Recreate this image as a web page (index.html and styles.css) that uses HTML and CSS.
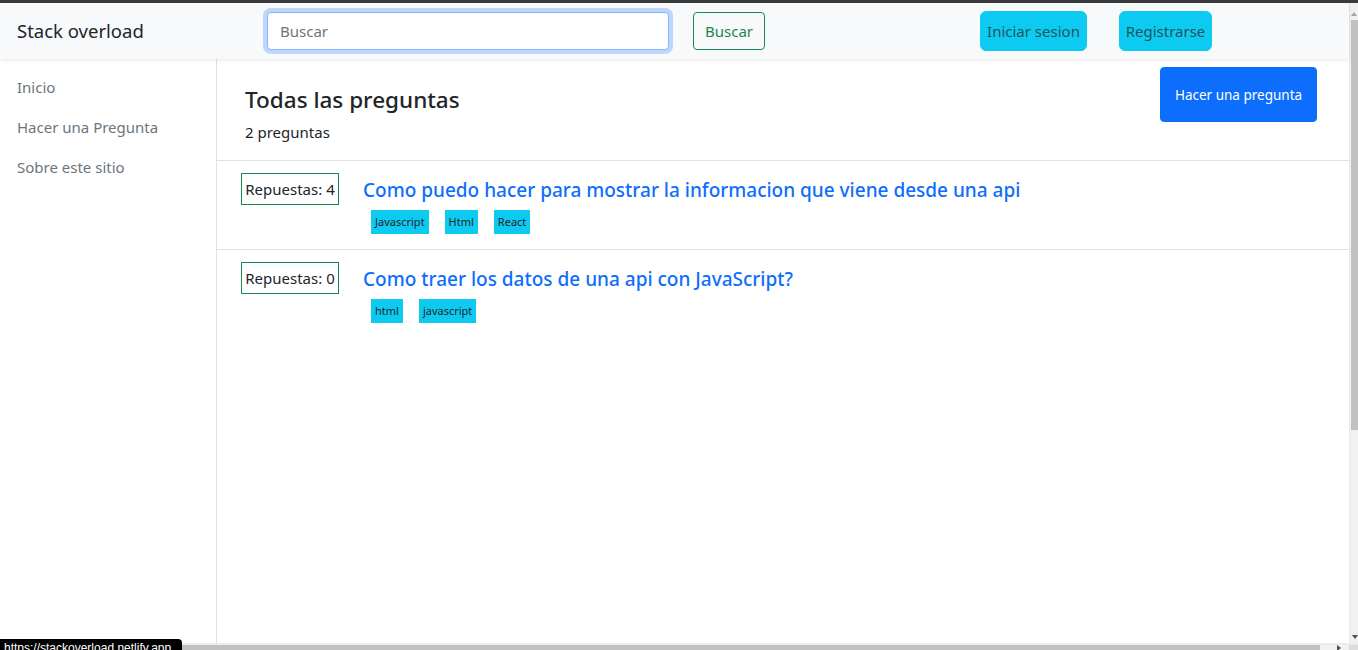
FILE: index.html
```html
<!DOCTYPE html>
<html lang="es">
<head>
<meta charset="utf-8">
<title>Stack overload</title>
<link rel="stylesheet" href="styles.css">
</head>
<body>
<div class="frame">
  <div class="chrome-top"></div>
  <div class="viewport">
    <div class="page">
      <nav class="navbar">
        <a class="brand" href="#">Stack overload</a>
        <input class="search" type="text" placeholder="Buscar">
        <button class="btn btn-outline-success">Buscar</button>
        <button class="btn btn-info btn-login">Iniciar sesion</button>
        <button class="btn btn-info btn-register">Registrarse</button>
      </nav>
      <div class="content">
        <aside class="sidebar">
          <a class="side-link" href="#">Inicio</a>
          <a class="side-link" href="#">Hacer una Pregunta</a>
          <a class="side-link" href="#">Sobre este sitio</a>
        </aside>
        <main class="main">
          <header class="main-header">
            <div class="heading">
              <h1 class="title">Todas las preguntas</h1>
              <p class="count">2 preguntas</p>
            </div>
            <button class="btn btn-primary btn-ask">Hacer una pregunta</button>
          </header>
          <div class="question">
            <div class="answers">Repuestas: 4</div>
            <div class="q-body">
              <a class="q-title" href="#">Como puedo hacer para mostrar la informacion que viene desde una api</a>
              <div class="tags">
                <span class="tag">Javascript</span>
                <span class="tag">Html</span>
                <span class="tag">React</span>
              </div>
            </div>
          </div>
          <div class="question">
            <div class="answers">Repuestas: 0</div>
            <div class="q-body">
              <a class="q-title" href="#">Como traer los datos de una api con JavaScript?</a>
              <div class="tags">
                <span class="tag">html</span>
                <span class="tag">javascript</span>
              </div>
            </div>
          </div>
        </main>
      </div>
    </div>
    <div class="vscroll">
      <div class="arrow-up"></div>
      <div class="vthumb"></div>
      <div class="vspace"></div>
      <div class="arrow-down"></div>
    </div>
  </div>
  <div class="hscroll">
    <div class="hthumb"></div>
    <div class="hspace"><div class="arrow-right"></div></div>
    <div class="corner"></div>
  </div>
  <div class="status">https://stackoverload.netlify.app</div>
</div>
</body>
</html>
```
FILE: styles.css
```css
* { box-sizing: border-box; }
html, body { margin: 0; padding: 0; background: #fff; }
body {
  font-family: "Noto Sans", "Open Sans", sans-serif;
  color: #212529;
  font-size: 16px;
}
.frame {
  width: 1358px;
  height: 650px;
  overflow: hidden;
  position: relative;
  display: flex;
  flex-direction: column;
}
.chrome-top { height: 3px; background: #3a3a3a; flex: none; }
.viewport { flex: 1; display: flex; min-height: 0; }
.page { flex: 1; display: flex; flex-direction: column; min-width: 0; }

.navbar {
  height: 56px;
  flex: none;
  background: #f8f9fa;
  box-shadow: 0 2px 4px rgba(0,0,0,.075);
  display: flex;
  align-items: center;
  padding-left: 17px;
  position: relative;
  z-index: 2;
}
.brand {
  width: 250px;
  flex: none;
  font-size: 18.5px;
  color: #212529;
  text-decoration: none;
  line-height: 30px;
}
.search {
  width: 402px;
  flex: none;
  height: 38px;
  border: 1px solid #86b7fe;
  border-radius: 4px;
  box-shadow: 0 0 0 4px rgba(13,110,253,.25);
  padding: 6px 12px;
  font-family: inherit;
  font-size: 15px;
  color: #212529;
  background: #fff;
  outline: none;
}
.search::placeholder { color: #6c757d; }
.btn {
  font-family: inherit;
  font-size: 15px;
  line-height: 24px;
  padding: 6px 12px;
  border-radius: 4px;
  border: 1px solid transparent;
  cursor: pointer;
  white-space: nowrap;
  flex: none;
}
.btn-outline-success {
  margin-left: 24px;
  height: 38px;
  width: 72px;
  padding: 6px 0;
  color: #198754;
  border-color: #198754;
  background: transparent;
}
.btn-info {
  height: 40px;
  background: #0dcaf0;
  border-color: #0dcaf0;
  color: #1b5563;
  border-radius: 6px;
  padding: 6px 0;
}
.btn-login { margin-left: 215px; width: 107px; }
.btn-register { margin-left: 32px; width: 93px; }

.content { flex: 1; display: flex; min-height: 0; }
.sidebar {
  width: 217px;
  flex: none;
  border-right: 1px solid #dee2e6;
  display: flex;
  flex-direction: column;
  padding-top: 16px;
  padding-left: 17px;
  gap: 16px;
}
.side-link {
  color: #6c757d;
  text-decoration: none;
  line-height: 24px;
  font-size: 15px;
}
.main { flex: 1; min-width: 0; }
.main-header {
  height: 102px;
  border-bottom: 1px solid #dee2e6;
  display: flex;
  justify-content: space-between;
  align-items: flex-start;
  padding: 8px 32px 0 28px;
}
.heading { padding-top: 18px; }
.title {
  margin: 0;
  font-size: 22.5px;
  font-weight: 500;
  line-height: 29px;
}
.count {
  margin: 6px 0 0;
  font-size: 15px;
  line-height: 24px;
}
.btn-primary {
  background: #0d6efd;
  border-color: #0d6efd;
  color: #fff;
  font-size: 13.5px;
  height: 55px;
  width: 157px;
  padding: 0;
  border-radius: 4px;
}

.question {
  display: flex;
  align-items: flex-start;
  padding: 12px 0 15px 24px;
  border-bottom: 1px solid #dee2e6;
}
.question:last-child { border-bottom: none; }
.answers {
  border: 1px solid #198754;
  padding: 3px 0;
  line-height: 24px;
  font-size: 15px;
  width: 98px;
  text-align: center;
  white-space: nowrap;
}
.q-body { margin-left: 24px; padding-top: 5px; }
.q-title {
  display: block;
  color: #0d6efd;
  text-decoration: none;
  font-size: 19px;
  font-weight: 500;
  line-height: 24px;
}
.tags { display: flex; gap: 16px; margin: 8px 0 0 8px; }
.tag {
  background: #0dcaf0;
  font-size: 11px;
  line-height: 16px;
  padding: 4px 4px;
  color: #212529;
}

.vscroll {
  width: 9px;
  flex: none;
  background: #f1f1f1;
  display: flex;
  flex-direction: column;
  align-items: flex-end;
  border-left: 1px solid #e8e8e8;
}
.arrow-up {
  margin: 9px 1px 0 0;
  width: 0; height: 0;
  border-left: 3px solid transparent;
  border-right: 3px solid transparent;
  border-bottom: 4px solid #a3a3a3;
}
.vthumb { width: 7px; height: 410px; background: #c1c1c1; margin-top: 4px; }
.vspace { flex: 1; }
.arrow-down {
  margin: 0 0 4px 0;
  width: 0; height: 0;
  border-left: 3px solid transparent;
  border-right: 3px solid transparent;
  border-top: 4px solid #505050;
}
.hscroll {
  height: 7px;
  flex: none;
  display: flex;
  background: #f1f1f1;
  border-top: 2px solid #ececec;
}
.hthumb { width: 1320px; background: #c1c1c1; }
.hspace { flex: 1; position: relative; }
.arrow-right {
  position: absolute;
  right: 8px; top: 0;
  width: 0; height: 0;
  border-top: 3px solid transparent;
  border-bottom: 3px solid transparent;
  border-left: 4px solid #505050;
}
.corner { width: 9px; background: #dcdcdc; }
.status {
  position: absolute;
  left: 0;
  top: 639px;
  width: 182px;
  height: 20px;
  background: #000;
  color: #fff;
  font-family: "Liberation Sans", Arial, sans-serif;
  font-size: 12px;
  line-height: 14px;
  padding: 2px 4px;
  border-top-right-radius: 4px;
  white-space: nowrap;
  overflow: hidden;
}
```
